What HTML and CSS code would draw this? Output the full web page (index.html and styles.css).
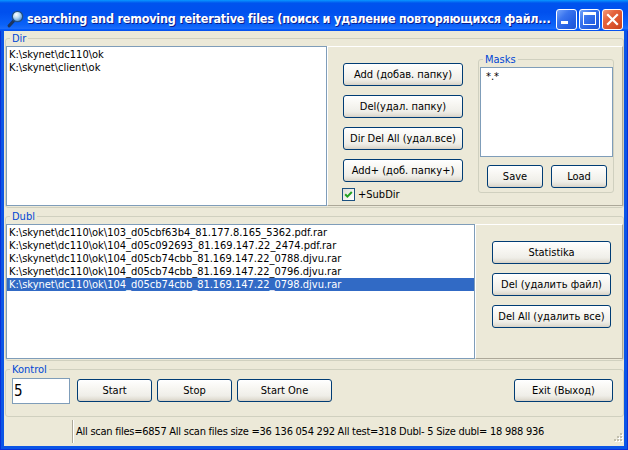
FILE: index.html
```html
<!DOCTYPE html>
<html>
<head>
<meta charset="utf-8">
<title>searching and removing reiterative files</title>
<link rel="stylesheet" href="styles.css">
</head>
<body>
<div class="window">
  <div class="titlebar">
    <svg class="app-icon" width="17" height="18" viewBox="0 0 17 18">
      <defs>
        <radialGradient id="glass" cx="0.38" cy="0.32" r="0.75">
          <stop offset="0" stop-color="#ffffff"/>
          <stop offset="0.45" stop-color="#b4d8f4"/>
          <stop offset="1" stop-color="#3d7fc4"/>
        </radialGradient>
      </defs>
      <line x1="2.2" y1="15.8" x2="7" y2="10.5" stroke="#1b355f" stroke-width="3.2" stroke-linecap="round"/>
      <circle cx="10.5" cy="6.5" r="5.2" fill="url(#glass)" stroke="#214f86" stroke-width="1.3"/>
    </svg>
    <span class="title">searching and removing reiterative files (поиск и удаление повторяющихся файл...</span>
    <div class="caption-buttons">
      <span class="cbtn cbtn-blue"><span class="min-glyph"></span></span>
      <span class="cbtn cbtn-blue"><span class="max-glyph"></span></span>
      <span class="cbtn cbtn-close">
        <svg width="19" height="19" viewBox="0 0 19 19"><path d="M5 5 L14 14 M14 5 L5 14" stroke="#fff" stroke-width="2.2" stroke-linecap="square"/></svg>
      </span>
    </div>
  </div>
  <div class="frame">
    <div class="client">
      <fieldset class="group dir-group">
        <legend>Dir</legend>
        <div class="dir-body">
          <div class="listbox dir-list">
            <div class="item">K:\skynet\dc110\ok</div>
            <div class="item">K:\skynet\client\ok</div>
          </div>
          <div class="panel dir-panel">
            <div class="dir-buttons">
              <button class="btn dir-btn">Add (добав. папку)</button>
              <button class="btn dir-btn">Del(удал. папку)</button>
              <button class="btn dir-btn">Dir Del All (удал.все)</button>
              <button class="btn dir-btn">Add+ (доб. папку+)</button>
              <label class="check">
                <span class="checkbox">
                  <svg width="11" height="11" viewBox="0 0 11 11"><path d="M2.2 5.2 L4.4 7.6 L8.8 3" fill="none" stroke="#21a121" stroke-width="2"/></svg>
                </span>
                <span>+SubDir</span>
              </label>
            </div>
            <fieldset class="group masks-group">
              <legend>Masks</legend>
              <div class="masks-body">
                <div class="memo">*.*</div>
                <div class="masks-buttons">
                  <button class="btn mask-btn">Save</button>
                  <button class="btn mask-btn">Load</button>
                </div>
              </div>
            </fieldset>
          </div>
        </div>
      </fieldset>

      <fieldset class="group dubl-group">
        <legend>Dubl</legend>
        <div class="dubl-body">
          <div class="listbox dubl-list">
            <div class="item">K:\skynet\dc110\ok\103_d05cbf63b4_81.177.8.165_5362.pdf.rar</div>
            <div class="item">K:\skynet\dc110\ok\104_d05c092693_81.169.147.22_2474.pdf.rar</div>
            <div class="item">K:\skynet\dc110\ok\104_d05cb74cbb_81.169.147.22_0788.djvu.rar</div>
            <div class="item">K:\skynet\dc110\ok\104_d05cb74cbb_81.169.147.22_0796.djvu.rar</div>
            <div class="item selected">K:\skynet\dc110\ok\104_d05cb74cbb_81.169.147.22_0798.djvu.rar</div>
          </div>
          <div class="panel dubl-panel">
            <button class="btn dubl-btn">Statistika</button>
            <button class="btn dubl-btn">Del (удалить файл)</button>
            <button class="btn dubl-btn">Del All (удалить все)</button>
          </div>
        </div>
      </fieldset>

      <fieldset class="group kontrol-group">
        <legend>Kontrol</legend>
        <div class="kontrol-body">
          <div class="edit">5</div>
          <button class="btn k-btn">Start</button>
          <button class="btn k-btn">Stop</button>
          <button class="btn k-btn k-wide">Start One</button>
          <button class="btn k-btn k-exit">Exit (Выход)</button>
        </div>
      </fieldset>

      <div class="statusbar">
        <div class="status-panel status-first"></div>
        <div class="status-panel status-text">All scan files=6857 All scan files size =36 136 054 292 All test=318 Dubl- 5 Size dubl= 18 988 936</div>
        <svg class="grip" width="12" height="12" viewBox="0 0 12 12">
          <g fill="#fff"><rect x="10" y="2" width="2" height="2"/><rect x="7" y="5" width="2" height="2"/><rect x="10" y="5" width="2" height="2"/><rect x="4" y="8" width="2" height="2"/><rect x="7" y="8" width="2" height="2"/><rect x="10" y="8" width="2" height="2"/></g>
          <g fill="#c2bfae"><rect x="9" y="1" width="2" height="2"/><rect x="6" y="4" width="2" height="2"/><rect x="9" y="4" width="2" height="2"/><rect x="3" y="7" width="2" height="2"/><rect x="6" y="7" width="2" height="2"/><rect x="9" y="7" width="2" height="2"/></g>
        </svg>
      </div>
    </div>
  </div>
</div>
</body>
</html>
```

FILE: styles.css
```css
* { box-sizing: border-box; }
html, body { margin: 0; padding: 0; }
body {
  width: 628px;
  height: 450px;
  overflow: hidden;
  font-family: "DejaVu Sans Condensed", "DejaVu Sans", sans-serif;
  font-stretch: semi-condensed;
  font-size: 11px;
  color: #000;
  background: #0a53e4;
}

.window {
  width: 628px;
  height: 450px;
  display: flex;
  flex-direction: column;
  background: #0a53e4;
}

/* ---------- title bar ---------- */
.titlebar {
  height: 31px;
  flex: none;
  display: flex;
  align-items: flex-start;
  padding: 0 5px 0 7px;
  background: linear-gradient(180deg, #0997ff 0%, #0053ee 10%, #0050ee 40%, #0a62f8 80%, #1a6cfb 92%, #005bff 95%, #0a4ee6 100%);
}
.app-icon { margin-top: 10px; flex: none; }
.title {
  margin: 11px 0 0 3px;
  color: #fff;
  font-family: "DejaVu Sans Condensed", "DejaVu Sans", sans-serif;
  font-stretch: condensed;
  font-weight: bold;
  font-size: 12.5px;
  line-height: 16px;
  letter-spacing: -0.22px;
  white-space: nowrap;
  text-shadow: 1px 1px 0 #0c1a8a;
  flex: 1;
  min-width: 0;
}
.caption-buttons {
  display: flex;
  gap: 2px;
  margin-top: 9px;
  flex: none;
}
.cbtn {
  width: 21px;
  height: 21px;
  border: 1px solid #fff;
  border-radius: 3px;
  position: relative;
  display: block;
}
.cbtn-blue {
  background: linear-gradient(135deg, #74a4fb 0%, #3a74ee 35%, #245fe3 70%, #1f55d4 100%);
}
.cbtn-close {
  background: linear-gradient(135deg, #f49a7a 0%, #e4643e 35%, #d9502a 70%, #c4411c 100%);
}
.cbtn-close svg { display: block; }
.min-glyph {
  position: absolute;
  left: 4px;
  top: 11px;
  width: 7px;
  height: 3px;
  background: #fff;
}
.max-glyph {
  position: absolute;
  left: 3px;
  top: 2px;
  width: 13px;
  height: 13px;
  border: 1px solid #fff;
  border-top-width: 3px;
}

/* ---------- frame / client ---------- */
.frame {
  flex: 1;
  display: flex;
  padding: 0 4px 4px;
  background: #0b55e6;
  box-shadow: inset 1px 0 0 #0831d9, inset -1px 0 0 #0831d9, inset 0 -1px 0 #0831d9;
}
.client {
  flex: 1;
  display: flex;
  flex-direction: column;
  background: #ece9d8;
  min-width: 0;
}

/* ---------- group boxes ---------- */
.group {
  margin: 0 0 0 1px;
  padding: 0;
  min-width: 0;
  border: 1px solid #d0d0bf;
  border-radius: 3px;
}
.group > legend {
  margin-left: 4px;
  padding: 0 2px;
  line-height: 13px;
  color: #0046d5;
}

.dir-group { margin-top: 1px; }
.dir-body {
  display: flex;
  padding: 1px 0 1px 0;
}
.dubl-group { margin-top: 2px; }
.dubl-body {
  display: flex;
  padding: 1px 0 1px 0;
}
.kontrol-group { margin-top: 2px; }

/* ---------- list boxes ---------- */
.listbox {
  background: #fff;
  border: 1px solid #7f9db9;
  padding: 1px 0 0 0;
  flex: none;
}
.item {
  height: 13px;
  line-height: 13px;
  padding-left: 2px;
  white-space: nowrap;
}
.item.selected {
  background: #316ac5;
  color: #fff;
}
.dir-list { width: 321px; height: 160px; }
.dubl-list { width: 469px; height: 135px; }

/* ---------- panels ---------- */
.panel {
  flex: 1;
  border: 1px solid;
  border-color: #ffffff #aca899 #aca899 #ffffff;
  min-width: 0;
}
.dir-panel {
  display: flex;
  align-items: flex-start;
  padding: 6px 0 0 15px;
}
.dir-buttons {
  margin-top: 10px;
  display: flex;
  flex-direction: column;
  gap: 9px;
  width: 120px;
}
.dubl-panel {
  display: flex;
  flex-direction: column;
  align-items: flex-start;
  gap: 9px;
  padding: 16px 0 0 16px;
}

/* ---------- buttons ---------- */
.btn {
  font: inherit;
  font-size: 11px;
  color: #000;
  height: 23px;
  padding: 0;
  margin: 0;
  border: 1px solid #003c74;
  border-radius: 3px;
  background: linear-gradient(180deg, #ffffff 0%, #f8f7f3 35%, #efeee8 75%, #e3e0d6 90%, #d6d0c5 100%);
  white-space: nowrap;
  line-height: 21px;
  text-align: center;
  display: block;
}
.dir-btn { width: 120px; }
.dubl-btn { width: 119px; }
.mask-btn { width: 56px; }
.k-btn { width: 75px; margin-top: 1px; }
.k-wide { width: 95px; }
.k-exit { width: 99px; margin-left: auto; }

/* ---------- checkbox ---------- */
.check {
  display: flex;
  align-items: center;
  gap: 3px;
  margin-left: -1px;
  margin-top: -3px;
  height: 13px;
  line-height: 13px;
}
.checkbox {
  width: 13px;
  height: 13px;
  border: 1px solid #1c5180;
  background: linear-gradient(135deg, #dcdcd7 0%, #f4f4f0 60%, #ffffff 100%);
  display: block;
  flex: none;
}
.checkbox svg { display: block; }

/* ---------- masks ---------- */
.masks-group {
  margin: 0 0 0 15px;
  width: 136px;
  flex: none;
}
.masks-body { padding: 1px 0 4px 1px; }
.memo {
  width: 133px;
  height: 90px;
  background: #fff;
  border: 1px solid #7f9db9;
  padding: 2px 0 0 5px;
  line-height: 13px;
}
.masks-buttons {
  display: flex;
  gap: 8px;
  margin: 8px 0 0 7px;
}

/* ---------- kontrol ---------- */
.kontrol-body {
  display: flex;
  align-items: flex-start;
  gap: 5px;
  padding: 2px 10px 12px 6px;
}
.edit {
  width: 58px;
  height: 26px;
  margin-right: 2px;
  background: #fff;
  border: 1px solid #7f9db9;
  font-size: 15px;
  line-height: 24px;
  padding-left: 1px;
}

/* ---------- status bar ---------- */
.statusbar {
  flex: 1;
  display: flex;
  align-items: stretch;
  padding: 3px 0 3px 0;
  position: relative;
}
.status-panel { line-height: 23px; white-space: nowrap; }
.status-first {
  width: 69px;
  border-right: 1px solid #aca899;
  box-shadow: 1px 0 0 #fff;
}
.status-text { padding-left: 3px; flex: 1; letter-spacing: -0.25px; }
.grip {
  position: absolute;
  right: 1px;
  bottom: 2px;
}
```
